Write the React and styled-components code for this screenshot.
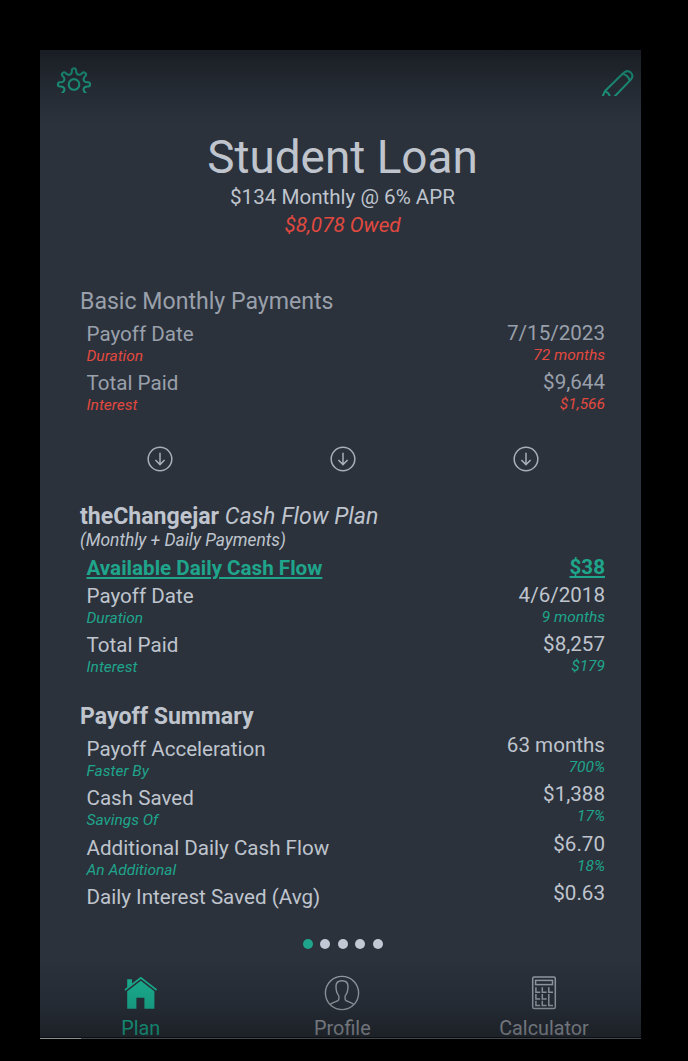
import React from "react";
import styled, { createGlobalStyle } from "styled-components";

const TEXT = "#bfc4cd";
const MUTED = "#9aa0ab";
const GREEN = "#1fa58b";
const RED = "#e2493f";

const basicRows = [
  { label: "Payoff Date", value: "7/15/2023", sub: "Duration", subValue: "72 months" },
  { label: "Total Paid", value: "$9,644", sub: "Interest", subValue: "$1,566" },
];
const planRows = [
  { label: "Payoff Date", value: "4/6/2018", sub: "Duration", subValue: "9 months" },
  { label: "Total Paid", value: "$8,257", sub: "Interest", subValue: "$179" },
];
const summaryRows = [
  { label: "Payoff Acceleration", value: "63 months", sub: "Faster By", subValue: "700%" },
  { label: "Cash Saved", value: "$1,388", sub: "Savings Of", subValue: "17%" },
  { label: "Additional Daily Cash Flow", value: "$6.70", sub: "An Additional", subValue: "18%" },
  { label: "Daily Interest Saved (Avg)", value: "$0.63" },
];

// smooth closed outline with eight rounded teeth
const gearPath = (cx, cy) => {
  const points = [];
  for (let i = 0; i < 8; i++) {
    [
      [-8, 16.2],
      [8, 16.2],
      [9.5, 12],
      [22.5, 10.2],
      [35.5, 12],
    ].forEach(([deg, r]) => {
      const a = ((i * 45 + deg - 90) * Math.PI) / 180;
      points.push([cx + r * Math.cos(a), cy + r * Math.sin(a)]);
    });
  }
  const mid = (p, q) => `${((p[0] + q[0]) / 2).toFixed(2)} ${((p[1] + q[1]) / 2).toFixed(2)}`;
  let d = `M${mid(points[points.length - 1], points[0])}`;
  points.forEach((p, i) => {
    d += `Q${p[0].toFixed(2)} ${p[1].toFixed(2)} ${mid(p, points[(i + 1) % points.length])}`;
  });
  return d + "Z";
};

const GearIcon = () => (
  <Icon width="36" height="26" viewBox="0 0 36 26" strokeWidth="2.1">
    <path d={gearPath(18, 17.4)} />
    <circle cx="18" cy="17.4" r="5.3" />
  </Icon>
);

const PencilIcon = () => (
  <Icon width="34" height="29" viewBox="0 0 34 29" strokeWidth="2">
    <path d="M1.4 30L4 24L22.4 6Q26.4 2.4 29.8 5.6Q33 9 29.8 12.6L13.4 29.6" />
    <path d="M4 24.4Q7.4 25.2 8.8 29" />
    <path d="M22.2 7Q27 8.2 28.8 13.4" />
  </Icon>
);

const ArrowIcon = () => (
  <Icon width="26" height="26" viewBox="0 0 26 26" strokeWidth="1.5">
    <circle cx="13" cy="13" r="11.8" />
    <path d="M13 6.8V18.4M8.4 14L13 18.6L17.6 14" />
  </Icon>
);

const HomeIcon = () => (
  <Icon width="34" height="34" viewBox="0 0 34 34" strokeWidth="1.6">
    <path d="M3.2 3.2H8V8L3.2 12Z" fill="currentColor" stroke="none" />
    <path d="M1 14L16.8 1.8L32.6 14" />
    <path
      d="M3.2 15.2L16.8 4.7L30.4 15.2V32.8H20.4V21.7H12.4V32.8H3.2Z"
      fill="currentColor"
      stroke="none"
    />
  </Icon>
);

const ProfileIcon = () => (
  <Icon width="36" height="36" viewBox="0 0 36 36" strokeWidth="1.4">
    <circle cx="18" cy="18" r="16.6" />
    <path d="M6.4 29.2C8 27.6 12.6 26.4 14 25.6C15.4 24.6 15 22 14.6 20.4C12.8 18.4 12 14.4 12 11.2C12 7.6 14.2 5.8 18 5.8S24 7.6 24 11.2C24 14.4 23.2 18.4 21.4 20.4C21 22 20.6 24.6 22 25.6C23.4 26.4 28 27.6 29.6 29.2" />
  </Icon>
);

const CalculatorIcon = () => (
  <Icon width="26" height="34" viewBox="0 0 26 34" strokeWidth="1.5">
    <rect x="1.7" y="1" width="22.6" height="31.6" rx="1.6" />
    <rect x="4.6" y="4.4" width="16.9" height="4.2" />
    <path d="M4.9 11.2V16.2H9.2M11.3 11.2V16.2H15.6M17.8 11.2V16.2H22" />
    <path d="M4.9 18V23H9.2M11.3 18V23H15.6M17.8 18V29.6H22" />
    <path d="M4.9 24.8V29.6H9.2M11.3 24.8V29.6H15.6" />
  </Icon>
);

const Rows = ({ rows, accent, muted, raise }) => (
  <RowList>
    {rows.map((row) => (
      <Row key={row.label}>
        <RowLeft>
          <Label $muted={muted}>{row.label}</Label>
          {row.sub && <Sub $accent={accent}>{row.sub}</Sub>}
        </RowLeft>
        <RowRight $raise={raise}>
          <Label $muted={muted}>{row.value}</Label>
          {row.subValue && <Sub $accent={accent}>{row.subValue}</Sub>}
        </RowRight>
      </Row>
    ))}
  </RowList>
);

function App() {
  return (
    <>
      <GlobalStyle />
      <Screen>
        <TopBar>
          <IconButton aria-label="Settings">
            <GearIcon />
          </IconButton>
          <IconButton aria-label="Edit">
            <PencilIcon />
          </IconButton>
        </TopBar>
        <Content>
          <Header>
            <Title>Student Loan</Title>
            <Terms>$134 Monthly @ 6% APR</Terms>
            <Owed>$8,078 Owed</Owed>
          </Header>

          <Heading $muted>Basic Monthly Payments</Heading>
          <Rows rows={basicRows} accent={RED} muted raise={1} />

          <Arrows>
            <ArrowIcon />
            <ArrowIcon />
            <ArrowIcon />
          </Arrows>

          <Heading>
            <strong>theChangejar</strong> <em>Cash Flow Plan</em>
          </Heading>
          <Note>(Monthly + Daily Payments)</Note>
          <CashFlow>
            <CashLink>Available Daily Cash Flow</CashLink>
            <CashLink $raised>$38</CashLink>
          </CashFlow>
          <Rows rows={planRows} accent={GREEN} raise={1} />

          <Heading $top={23.7}>
            <strong>Payoff Summary</strong>
          </Heading>
          <Rows rows={summaryRows} accent={GREEN} raise={4} />

          <Dots>
            <Dot $active />
            <Dot />
            <Dot />
            <Dot />
            <Dot />
          </Dots>
        </Content>
        <TabBar>
          <Tab $active>
            <HomeIcon />
            <span>Plan</span>
          </Tab>
          <Tab>
            <ProfileIcon />
            <span>Profile</span>
          </Tab>
          <Tab>
            <CalculatorIcon />
            <span>Calculator</span>
          </Tab>
        </TabBar>
        <Shade />
      </Screen>
      <Progress>
        <ProgressFill />
      </Progress>
    </>
  );
}

const GlobalStyle = createGlobalStyle`
  body {
    margin: 0;
    background: #000000;
    font-family: Roboto, "Liberation Sans", sans-serif;
    overflow: hidden;
  }
  * {
    box-sizing: border-box;
  }
`;
const Screen = styled.div`
  position: relative;
  display: flex;
  flex-direction: column;
  width: 601px;
  height: 987px;
  margin: 50px 0 0 40px;
  background-color: #2b323c;
  color: ${TEXT};
`;
const Shade = styled.div`
  position: absolute;
  inset: 0;
  pointer-events: none;
  background: linear-gradient(
    to bottom,
    rgba(0, 0, 0, 0.42) 0,
    rgba(0, 0, 0, 0.2) 30px,
    rgba(0, 0, 0, 0) 75px,
    rgba(0, 0, 0, 0) 905px,
    rgba(0, 0, 0, 0.15) 955px,
    rgba(0, 0, 0, 0.34) 987px
  );
`;
const Icon = styled.svg.attrs({ fill: "none", stroke: "currentColor" })`
  display: block;
  flex: none;
`;
const TopBar = styled.div`
  display: flex;
  justify-content: space-between;
  height: 79px;
  padding: 17px 6px 0 16px;
`;
const IconButton = styled.button`
  display: flex;
  align-items: flex-start;
  padding: 0;
  border: none;
  background: none;
  color: ${GREEN};
  height: 30px;
`;
const Content = styled.div`
  display: flex;
  flex-direction: column;
  height: 843px;
  padding: 0 36px 0 40px;
`;
const Header = styled.div`
  height: 157px;
  text-align: center;
`;
const Title = styled.h1`
  margin: 0 0 -2px;
  font-size: 45.9px;
  line-height: 56px;
  font-weight: 400;
`;
const Terms = styled.div`
  font-size: 20.6px;
  line-height: 28px;
`;
const Owed = styled.div`
  font-size: 20.7px;
  line-height: 28px;
  font-style: italic;
  color: ${RED};
`;
const Heading = styled.h2`
  margin: ${(props) => props.$top || 0}px 0 -2px;
  font-size: 23.1px;
  line-height: 32px;
  font-weight: 400;
  color: ${(props) => (props.$muted ? MUTED : TEXT)};
`;
const RowList = styled.div`
  display: flex;
  flex-direction: column;
  gap: 5.3px;
  padding: 6px 0 0 6.5px;
`;
const Row = styled.div`
  display: flex;
  justify-content: space-between;
`;
const RowLeft = styled.div``;
const RowRight = styled.div`
  margin-top: -${(props) => props.$raise}px;
  text-align: right;
`;
const Label = styled.div`
  font-size: 20.6px;
  line-height: 25px;
  color: ${(props) => (props.$muted ? MUTED : TEXT)};
`;
const Sub = styled.div`
  font-size: 15.5px;
  line-height: 19px;
  font-style: italic;
  color: ${(props) => props.$accent};
`;
const Arrows = styled.div`
  display: flex;
  justify-content: space-between;
  padding: 30.7px 66.5px 29px;
  color: #a9aeb7;
`;
const Note = styled.div`
  font-size: 17.4px;
  line-height: 18px;
  font-style: italic;
`;
const CashFlow = styled.div`
  display: flex;
  justify-content: space-between;
  height: 29px;
  padding: 7px 0 0 6.5px;
`;
const CashLink = styled.a`
  margin-top: ${(props) => (props.$raised ? -1 : 0)}px;
  font-size: 20.6px;
  line-height: 25px;
  font-weight: 700;
  color: ${GREEN};
  text-decoration: underline;
`;
const Dots = styled.div`
  display: flex;
  justify-content: center;
  gap: 7.5px;
  margin-top: auto;
  padding-bottom: 23.5px;
`;
const Dot = styled.span`
  width: 10px;
  height: 10px;
  border-radius: 50%;
  background-color: ${(props) => (props.$active ? GREEN : "#c3c8d5")};
`;
const TabBar = styled.div`
  display: grid;
  grid-template-columns: repeat(3, 201.6px);
  height: 65px;
`;
const Tab = styled.div`
  display: grid;
  grid-template-rows: 41px 18px;
  row-gap: 7px;
  justify-items: center;
  align-items: center;
  font-size: 19.8px;
  line-height: 18px;
  color: ${(props) => (props.$active ? "#1bb596" : "#9ba0a9")};
`;
const Progress = styled.div`
  width: 601px;
  height: 2px;
  margin-left: 40px;
  border-top: 1px solid #0c0e11;
  background-color: #43474e;
`;
const ProgressFill = styled.div`
  width: 41px;
  height: 1px;
  background-color: #8b8e92;
`;
export default App;
